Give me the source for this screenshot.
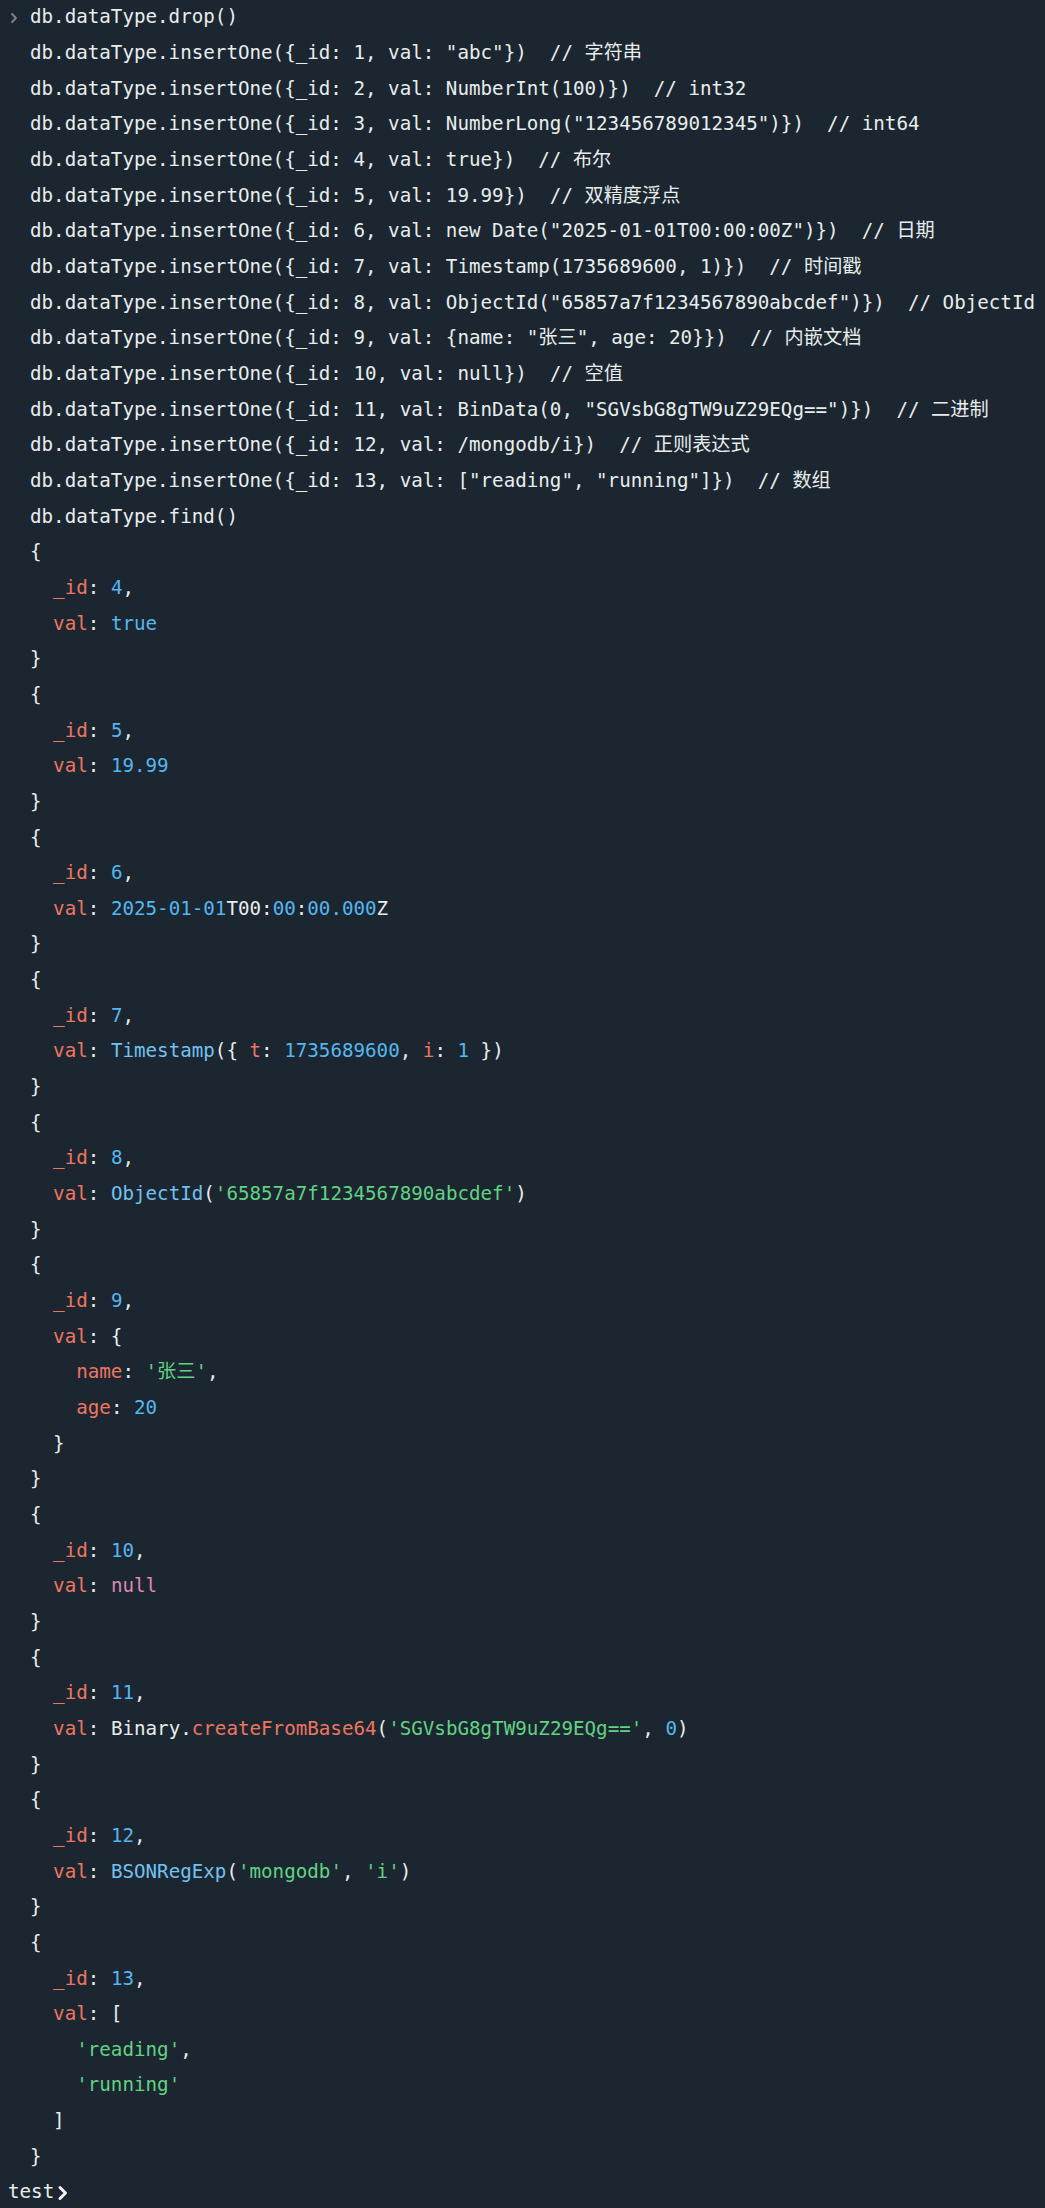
const W = "text-[#e8edec]";
const K = "text-[#ee7560]";
const N = "text-[#56b6ee]";
const S = "text-[#62d282]";
const F = "text-[#72c2f0]";
const P = "text-[#de88b6]";

type Seg = [string, string];

const commands: string[] = [
    'db.dataType.insertOne({_id: 1, val: "abc"})  // 字符串',
    'db.dataType.insertOne({_id: 2, val: NumberInt(100)})  // int32',
    'db.dataType.insertOne({_id: 3, val: NumberLong("123456789012345")})  // int64',
    'db.dataType.insertOne({_id: 4, val: true})  // 布尔',
    'db.dataType.insertOne({_id: 5, val: 19.99})  // 双精度浮点',
    'db.dataType.insertOne({_id: 6, val: new Date("2025-01-01T00:00:00Z")})  // 日期',
    'db.dataType.insertOne({_id: 7, val: Timestamp(1735689600, 1)})  // 时间戳',
    'db.dataType.insertOne({_id: 8, val: ObjectId("65857a7f1234567890abcdef")})  // ObjectId',
    'db.dataType.insertOne({_id: 9, val: {name: "张三", age: 20}})  // 内嵌文档',
    'db.dataType.insertOne({_id: 10, val: null})  // 空值',
    'db.dataType.insertOne({_id: 11, val: BinData(0, "SGVsbG8gTW9uZ29EQg==")})  // 二进制',
    'db.dataType.insertOne({_id: 12, val: /mongodb/i})  // 正则表达式',
    'db.dataType.insertOne({_id: 13, val: ["reading", "running"]})  // 数组',
    "db.dataType.find()",
];

function doc(id: string, val: Seg[][]): Seg[][] {
    return [
        [["{", W]],
        [["  ", W], ["_id", K], [": ", W], [id, N], [",", W]],
        ...val,
        [["}", W]],
    ];
}

const output: Seg[][] = [
    ...doc("4", [[["  ", W], ["val", K], [": ", W], ["true", N]]]),
    ...doc("5", [[["  ", W], ["val", K], [": ", W], ["19.99", N]]]),
    ...doc("6", [[
        ["  ", W], ["val", K], [": ", W], ["2025-01-01", N], ["T00:", W], ["00", N], [":", W], ["00.000", N], ["Z", W],
    ]]),
    ...doc("7", [[
        ["  ", W], ["val", K], [": ", W], ["Timestamp", F], ["({ ", W], ["t", K], [": ", W], ["1735689600", N], [", ", W], ["i", K], [": ", W], ["1", N], [" })", W],
    ]]),
    ...doc("8", [[
        ["  ", W], ["val", K], [": ", W], ["ObjectId", F], ["(", W], ["'65857a7f1234567890abcdef'", S], [")", W],
    ]]),
    ...doc("9", [
        [["  ", W], ["val", K], [": {", W]],
        [["    ", W], ["name", K], [": ", W], ["'张三'", S], [",", W]],
        [["    ", W], ["age", K], [": ", W], ["20", N]],
        [["  }", W]],
    ]),
    ...doc("10", [[["  ", W], ["val", K], [": ", W], ["null", P]]]),
    ...doc("11", [[
        ["  ", W], ["val", K], [": ", W], ["Binary.", W], ["createFromBase64", K], ["(", W], ["'SGVsbG8gTW9uZ29EQg=='", S], [", ", W], ["0", N], [")", W],
    ]]),
    ...doc("12", [[
        ["  ", W], ["val", K], [": ", W], ["BSONRegExp", F], ["(", W], ["'mongodb'", S], [", ", W], ["'i'", S], [")", W],
    ]]),
    ...doc("13", [
        [["  ", W], ["val", K], [": [", W]],
        [["    ", W], ["'reading'", S], [",", W]],
        [["    ", W], ["'running'", S]],
        [["  ]", W]],
    ]),
];

const row = "h-[35.67px] flex items-center whitespace-pre";

export default function App() {
    return (
        <div className="min-h-[2208px] w-full bg-[#1b2631] text-[19.2px] font-['DejaVu_Sans_Mono','Noto_Sans_CJK_SC',monospace] text-[#e8edec]">
            <div className={`${row} pl-[10px]`}>
                <svg className="w-[8px] h-[12px] mr-[12px]" viewBox="0 0 8 12" fill="none">
                    <path d="M2 2l4 4-4 4" stroke="#7d8890" strokeWidth="1.8" strokeLinecap="round" strokeLinejoin="round"/>
                </svg>
                <span>db.dataType.drop()</span>
            </div>
            {commands.map((c, i) => (
                <div key={i} className={`${row} pl-[30px]`}>{c}</div>
            ))}
            {output.map((line, i) => (
                <div key={i} className={`${row} pl-[30px]`}>
                    {line.map(([t, c], j) => (
                        <span key={j} className={c}>{t}</span>
                    ))}
                </div>
            ))}
            <div className={`${row} pl-[8px]`}>
                <span>test</span>
                <svg className="w-[12px] h-[16px] ml-[3px]" viewBox="0 0 12 16" fill="none">
                    <path d="M3 2.5l5.5 5.5-5.5 5.5" stroke="#f2f5f4" strokeWidth="3" strokeLinecap="round" strokeLinejoin="round"/>
                </svg>
            </div>
        </div>
    )
}
